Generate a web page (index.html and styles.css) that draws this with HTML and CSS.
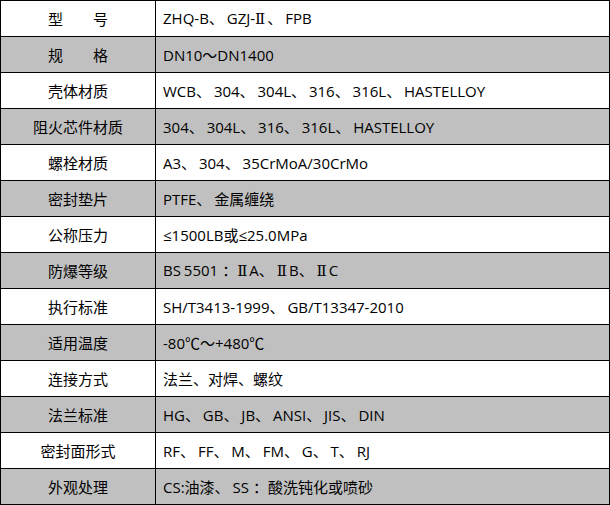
FILE: index.html
```html
<!DOCTYPE html>
<html lang="zh">
<head>
<meta charset="utf-8">
<link rel="stylesheet" href="styles.css">
</head>
<body>
<table class="spec">
<colgroup><col class="c1"><col class="c2"></colgroup>
<tbody>
<tr><td class="label">型　　号</td><td class="val">ZHQ-B、 GZJ-<span class="rn">Ⅱ</span>、 FPB</td></tr>
<tr class="alt"><td class="label">规　　格</td><td class="val">DN10～DN1400</td></tr>
<tr><td class="label">壳体材质</td><td class="val">WCB、 304、 304L、 316、 316L、 HASTELLOY</td></tr>
<tr class="alt"><td class="label">阻火芯件材质</td><td class="val">304、 304L、 316、 316L、 HASTELLOY</td></tr>
<tr><td class="label">螺栓材质</td><td class="val">A3、 304、 35CrMoA/30CrMo</td></tr>
<tr class="alt"><td class="label">密封垫片</td><td class="val">PTFE、 金属缠绕</td></tr>
<tr><td class="label">公称压力</td><td class="val">≤1500LB或≤25.0MPa</td></tr>
<tr class="alt"><td class="label">防爆等级</td><td class="val">BS 5501<span class="colon">：</span><span class="rn">Ⅱ</span>A、 <span class="rn">Ⅱ</span>B、 <span class="rn">Ⅱ</span>C</td></tr>
<tr><td class="label">执行标准</td><td class="val">SH/T3413-1999、 GB/T13347-2010</td></tr>
<tr class="alt"><td class="label">适用温度</td><td class="val">-80℃～+480℃</td></tr>
<tr><td class="label">连接方式</td><td class="val">法兰、对焊、螺纹</td></tr>
<tr class="alt"><td class="label">法兰标准</td><td class="val">HG、 GB、 JB、 ANSI、 JIS、 DIN</td></tr>
<tr><td class="label">密封面形式</td><td class="val">RF、 FF、 M、 FM、 G、 T、 RJ</td></tr>
<tr class="alt"><td class="label">外观处理</td><td class="val">CS:油漆、 SS<span class="colon">：</span>酸洗钝化或喷砂</td></tr>
</tbody>
</table>
</body>
</html>
```

FILE: styles.css
```css
html, body {
  margin: 0;
  padding: 0;
  background: #fff;
}
.spec {
  border-collapse: collapse;
  width: 610px;
  table-layout: fixed;
  font-family: "Open Sans", "Noto Sans CJK SC", sans-serif;
  font-size: 15px;
  color: #000;
}
.c1 { width: 155px; }
.spec td {
  border: 1px solid #000;
  height: 35px;
  padding: 0;
  vertical-align: middle;
  white-space: nowrap;
  line-height: 20px;
}
.spec tr.alt td {
  background: #c0c0c0;
}
.label {
  text-align: center;
}
.spec td.val {
  padding-left: 7px;
  word-spacing: -1px;
}
.rn {
  font-family: "DejaVu Serif", serif;
  font-size: 15px;
  margin-right: 2px;
}
.colon {
  margin-left: 4px;
}
```
